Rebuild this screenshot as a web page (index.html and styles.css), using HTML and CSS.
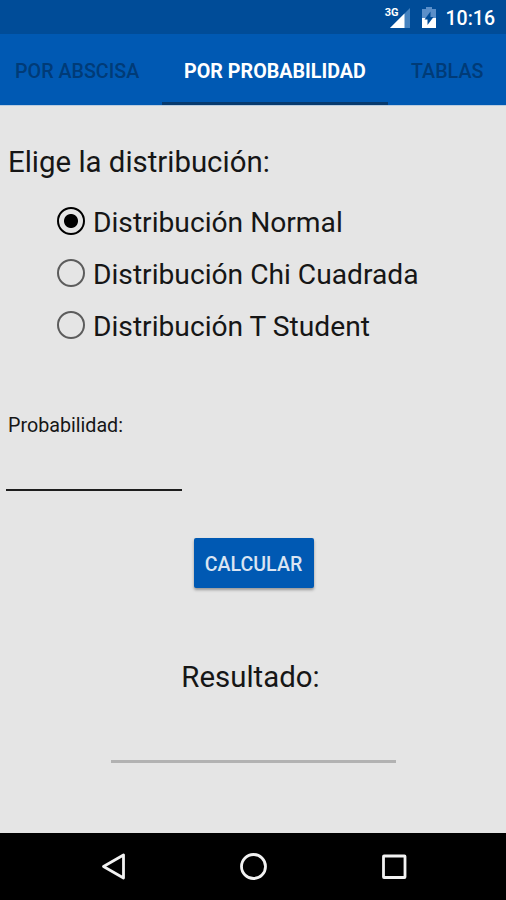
FILE: index.html
```html
<!DOCTYPE html>
<html lang="es">
<head>
    <meta charset="UTF-8">
    <meta name="viewport" content="width=device-width, initial-scale=1.0">
    <title>Distribuciones</title>
    <link rel="stylesheet" href="styles.css">
</head>
<body>
    <div class="status">
        <span class="network">3G</span>
        <svg class="signal" width="20" height="20" viewBox="0 0 20 20">
            <path d="M20 0V20H0Z" fill="#4582bf"/>
            <path d="M14.500 5.500V20H0Z" fill="#fff"/>
        </svg>
        <svg class="battery" width="14" height="21" viewBox="0 0 14 21">
            <path d="M4 0H10V2H14V11H0V2H4Z" fill="#5b8fc9"/>
            <path d="M0 11H14V21H0Z" fill="#fff"/>
            <path d="M8.500 4.500V10H11.500L5.500 18V12.500H2.500Z" fill="#004c98"/>
        </svg>
        <span class="time">10:16</span>
    </div>
    <div class="tabs">
        <div class="tab first">POR ABSCISA</div>
        <div class="tab active">POR PROBABILIDAD</div>
        <div class="tab last">TABLAS</div>
    </div>
    <main>
        <h1>Elige la distribución:</h1>
        <div class="options">
            <label><input type="radio" name="dist" checked>Distribución Normal</label>
            <label><input type="radio" name="dist">Distribución Chi Cuadrada</label>
            <label><input type="radio" name="dist">Distribución T Student</label>
        </div>
        <label class="prob" for="prob">Probabilidad:</label>
        <input type="text" class="field" id="prob">
        <button>CALCULAR</button>
        <h2>Resultado:</h2>
        <input type="text" class="result" disabled>
    </main>
    <div class="navbar">
        <svg width="28" height="30" viewBox="0 0 28 30">
            <path d="M23.500 4V27L3.500 15.500Z" fill="none" stroke="#f2f2f2" stroke-width="2.800" stroke-linejoin="round"/>
        </svg>
        <svg width="30" height="30" viewBox="0 0 30 30">
            <circle cx="14.500" cy="15.500" r="12" fill="none" stroke="#f2f2f2" stroke-width="2.800"/>
        </svg>
        <svg width="28" height="30" viewBox="0 0 28 30">
            <rect x="3.500" y="5" width="21.500" height="21.500" rx="0.500" fill="none" stroke="#f2f2f2" stroke-width="2.800"/>
        </svg>
    </div>
</body>
</html>
```
FILE: styles.css
```css
*{
    box-sizing: border-box;
    font-family: Roboto, sans-serif;
}
body{
    margin: 0;
    height: 900px;
    background-color: #e5e5e5;
    color: #161616;
    display: flex;
    flex-direction: column;
    overflow: hidden;
}

.status{
    height: 34px;
    background-color: #004c98;
    color: white;
    display: flex;
    justify-content: flex-end;
    padding-right: 11px;
}
.network{
    font-size: 11px;
    font-weight: 700;
    line-height: 13px;
    margin-top: 6px;
    margin-right: -9px;
    z-index: 1;
}
.signal{
    margin-top: 8px;
}
.battery{
    margin-top: 7px;
    margin-left: 12px;
}
.time{
    font-size: 19.5px;
    font-weight: 500;
    line-height: 37px;
    margin-left: 10px;
}

.tabs{
    height: 72px;
    background-color: #0059b3;
    display: flex;
    border-bottom: 1px solid #b9cce0;
}
.tab{
    font-size: 19.7px;
    font-weight: 500;
    line-height: 75px;
    color: #003b77;
    white-space: nowrap;
}
.first{
    width: 162px;
    padding-left: 15px;
}
.active{
    width: 226px;
    text-align: center;
    color: white;
    font-weight: 700;
    border-bottom: 3px solid #073a6e;
}
.last{
    padding-left: 23px;
}

main{
    flex: 1;
    display: flex;
    flex-direction: column;
}
h1, h2{
    margin: 0;
    font-size: 29.4px;
    font-weight: 400;
    line-height: 36px;
}
h1{
    margin-top: 38px;
    padding-left: 8px;
}
.options{
    margin-top: 16px;
    padding-left: 57px;
}
.options label{
    height: 52px;
    display: flex;
    align-items: center;
    font-size: 28.2px;
}
.options input{
    appearance: none;
    width: 28px;
    height: 28px;
    margin: 0 8px 2px 0;
    border: 2px solid #5c5c5c;
    border-radius: 50%;
}
.options input:checked{
    border-color: #000;
    background: radial-gradient(circle, #000 6.500px, transparent 7.500px);
}
.prob{
    font-size: 19.7px;
    line-height: 24px;
    margin-top: 62px;
    padding-left: 8px;
}
.field, .result{
    border: none;
    background: none;
    padding: 0;
    font-size: 28px;
}
.field{
    width: 176px;
    height: 44px;
    margin-top: 9px;
    margin-left: 6px;
    border-bottom: 2px solid #1d1d1d;
}
button{
    align-self: center;
    width: 120px;
    height: 50px;
    margin-top: 47px;
    margin-left: 1px;
    padding: 2px 0 0;
    border: none;
    border-radius: 2px;
    background-color: #0059b3;
    color: #d9e4f2;
    font-size: 19.6px;
    font-weight: 500;
    box-shadow: 0 2px 3px rgba(0,0,0,0.35);
}
h2{
    margin-top: 71px;
    padding-right: 5px;
    text-align: center;
}
.result{
    width: 285px;
    height: 44px;
    margin-top: 24px;
    margin-left: 111px;
    border-bottom: 3px solid #b2b2b2;
}

.navbar{
    height: 67px;
    background-color: #000;
    display: flex;
    justify-content: space-between;
    padding: 18px 98px 0 100px;
}
```
